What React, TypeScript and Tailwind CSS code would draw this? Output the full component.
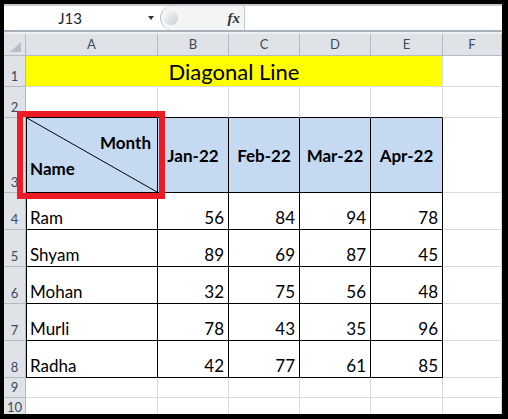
import React from "react";

const rows = [
  { n: 4, name: "Ram", v: [56, 84, 94, 78] },
  { n: 5, name: "Shyam", v: [89, 69, 87, 45] },
  { n: 6, name: "Mohan", v: [32, 75, 56, 48] },
  { n: 7, name: "Murli", v: [78, 43, 35, 96] },
  { n: 8, name: "Radha", v: [42, 77, 61, 85] },
];

const months = ["Jan-22", "Feb-22", "Mar-22", "Apr-22"];

// header cells (row numbers / column letters)
function RowHead({ n }: { n: number }) {
  return (
    <div className="flex items-end justify-center border-r border-b border-[#b3bac4] bg-[#dfe3e8] pb-[3px] text-[13px] leading-none text-[#3b4a5e]">
      {n}
    </div>
  );
}

function ColHead({ label }: { label: string }) {
  return (
    <div className="flex items-center justify-center border-r border-b border-[#b3bac4] bg-[#dfe3e8] text-[13px] leading-none text-[#3b4a5e]">
      {label}
    </div>
  );
}

function Cell({ className = "", children }: { className?: string; children?: React.ReactNode }) {
  return <div className={`border-r border-b border-[#d9d9d9] ${className}`}>{children}</div>;
}

export default function App() {
  return (
    <div
      className="relative h-[419px] w-[508px] overflow-hidden bg-black pt-[4px] pl-[4px]"
      style={{ fontFamily: "Lato, 'Open Sans', sans-serif" }}
    >
      <div className="flex h-[410px] w-[498px] flex-col overflow-hidden bg-white">
        {/* ribbon remnant */}
        <div className="h-[2px] shrink-0 bg-[#c7cbd1]" />

        {/* formula bar */}
        <div className="flex h-[24px] shrink-0 items-stretch bg-white">
          <div className="flex w-[132px] items-center justify-center text-[15px] text-[#1b2333]">J13</div>
          <div className="flex w-[24px] items-center pl-[12px]">
            <div className="h-0 w-0 border-x-[3.5px] border-t-[4px] border-x-transparent border-t-[#333]" />
          </div>
          <div className="flex w-[84px] items-center rounded-l-full border-l border-[#b9bec6] bg-[#f3f4f6] pr-[4px]">
            <div className="ml-[3px] h-[14px] w-[14px] rounded-full bg-gradient-to-br from-[#fafafa] to-[#c9cdd2]" />
            <span
              className="ml-auto text-[15px] font-bold italic text-[#333]"
              style={{ fontFamily: "'Liberation Serif', serif" }}
            >
              fx
            </span>
          </div>
          <div className="w-px bg-[#c3c8cf]" />
          <div className="flex-1 bg-white" />
        </div>
        <div className="h-[2px] shrink-0 bg-[#a9afb7]" />
        <div className="h-[2px] shrink-0 bg-[#eceef1]" />

        {/* sheet */}
        <div className="grid shrink-0 grid-cols-[22px_132px_71px_71px_71px_72px_59px] grid-rows-[22px_31px_31px_75px_37px_37px_37px_37px_37px_20px_20px]">
          {/* column header row */}
          <div className="relative border-r border-b border-[#b3bac4] bg-[#dfe3e8]">
            <svg className="absolute right-[4px] bottom-[3px]" width="11" height="10">
              <polygon points="11,0 11,10 0,10" fill="#b7bec7" />
            </svg>
          </div>
          {["A", "B", "C", "D", "E", "F"].map((c) => (
            <ColHead key={c} label={c} />
          ))}

          {/* row 1 */}
          <RowHead n={1} />
          <div className="col-span-5 flex items-end justify-center border-r border-b border-[#d9d9d9] bg-[#ffff00] pb-[3px] text-[22px] leading-none text-black">
            Diagonal Line
          </div>
          <Cell />

          {/* row 2 */}
          <RowHead n={2} />
          <Cell className="!border-b-black" />
          <Cell className="!border-b-black" />
          <Cell className="!border-b-black" />
          <Cell className="!border-b-black" />
          <Cell className="!border-b-black" />
          <Cell />

          {/* row 3: header */}
          <RowHead n={3} />
          <div className="relative flex flex-col border-l border-r border-b border-black bg-[#c5d9f1] text-[17px] font-bold leading-none text-black">
            <svg className="absolute inset-0 h-full w-full" preserveAspectRatio="none" viewBox="0 0 100 100">
              <line x1="0" y1="0" x2="100" y2="100" stroke="black" strokeWidth="1" vectorEffect="non-scaling-stroke" />
            </svg>
            <div className="mt-[16px] self-end pr-[6px]">Month</div>
            <div className="mt-[9px] pl-[3px]">Name</div>
          </div>
          {months.map((m) => (
            <div
              key={m}
              className="flex items-center justify-center border-r border-b border-black bg-[#c5d9f1] pt-[1px] text-[17px] font-bold leading-none text-black"
            >
              {m}
            </div>
          ))}
          <Cell />

          {/* data rows */}
          {rows.map((r) => (
            <React.Fragment key={r.n}>
              <RowHead n={r.n} />
              <div className="flex items-end border-l border-r border-b border-black pb-[3px] pl-[3px] text-[17px] leading-none text-black">
                {r.name}
              </div>
              {r.v.map((v, i) => (
                <div
                  key={i}
                  className="flex items-end justify-end border-r border-b border-black pb-[3px] pr-[4px] text-[17px] leading-none text-black"
                >
                  {v}
                </div>
              ))}
              <Cell />
            </React.Fragment>
          ))}

          {/* rows 9, 10 */}
          {[9, 10].map((n) => (
            <React.Fragment key={n}>
              <RowHead n={n} />
              <Cell />
              <Cell />
              <Cell />
              <Cell />
              <Cell />
              <Cell />
            </React.Fragment>
          ))}
        </div>
      </div>

      {/* red highlight box around A3 */}
      <div className="absolute left-[17px] top-[111px] h-[88px] w-[148px] border-[6px] border-[#ed1c24]" />
    </div>
  );
}
